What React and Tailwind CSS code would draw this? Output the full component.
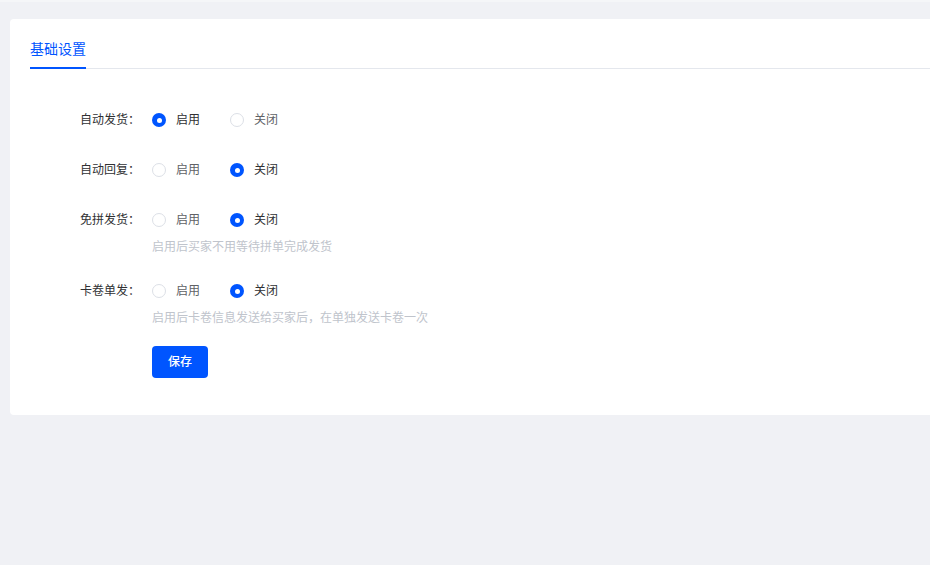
import { useState } from 'react';

const FONT = { fontFamily: '"Liberation Sans", "Noto Sans CJK SC", sans-serif' };

const settings = [
  { key: 'autoShip', label: '自动发货', value: 'on' },
  { key: 'autoReply', label: '自动回复', value: 'off' },
  { key: 'freeGroup', label: '免拼发货', value: 'off', help: '启用后买家不用等待拼单完成发货' },
  { key: 'cardSingle', label: '卡卷单发', value: 'off', help: '启用后卡卷信息发送给买家后，在单独发送卡卷一次' },
];

const Radio = ({ checked, label, onClick }) => (
  <button onClick={onClick} className="flex items-center mr-[30px] h-[32px]">
    {checked ? (
      <span className="w-[14px] h-[14px] rounded-full bg-[#0055ff] flex items-center justify-center">
        <span className="w-[5px] h-[5px] rounded-full bg-white"></span>
      </span>
    ) : (
      <span className="w-[14px] h-[14px] rounded-full border border-[#dcdfe6] bg-white"></span>
    )}
    <span className={`ml-[10px] text-[12px] ${checked ? 'text-[#303133]' : 'text-[#606266]'}`}>{label}</span>
  </button>
);

export default function App() {
  const [values, setValues] = useState(
    Object.fromEntries(settings.map(s => [s.key, s.value]))
  );

  return (
    <div className="w-[930px] h-[565px] bg-[#f0f1f5] overflow-hidden border-t-2 border-[#f5f6f8]" style={FONT}>
      <div className="ml-[10px] mt-[17px] w-[940px] h-[396px] bg-white rounded-[4px]">
        {/* Tabs */}
        <div className="mx-[20px] border-b border-[#e4e7ed] flex">
          <div className="h-[50px] pt-[20px] text-[14px] leading-[20px] text-[#0055ff] border-b-2 border-[#0055ff] -mb-px">
            基础设置
          </div>
        </div>

        {/* Form */}
        <div className="pt-[35px]">
          {settings.map(s => (
            <div key={s.key} className={s.help ? 'mb-[17px]' : 'mb-[18px]'}>
              <div className="flex">
                <div className="w-[142px] pr-[12px] text-right text-[12px] leading-[32px] text-[#303133]">
                  {s.label}：
                </div>
                <div className="flex">
                  <Radio
                    checked={values[s.key] === 'on'}
                    label="启用"
                    onClick={() => setValues({ ...values, [s.key]: 'on' })}
                  />
                  <Radio
                    checked={values[s.key] === 'off'}
                    label="关闭"
                    onClick={() => setValues({ ...values, [s.key]: 'off' })}
                  />
                </div>
              </div>
              {s.help && (
                <div className="pl-[142px] text-[12px] leading-[22px] text-[#c0c4cc]">{s.help}</div>
              )}
            </div>
          ))}
          <div className="pl-[142px]">
            <button className="w-[56px] h-[32px] rounded-[4px] bg-[#0055ff] text-white text-[12px] font-medium">
              保存
            </button>
          </div>
        </div>
      </div>
    </div>
  );
}
